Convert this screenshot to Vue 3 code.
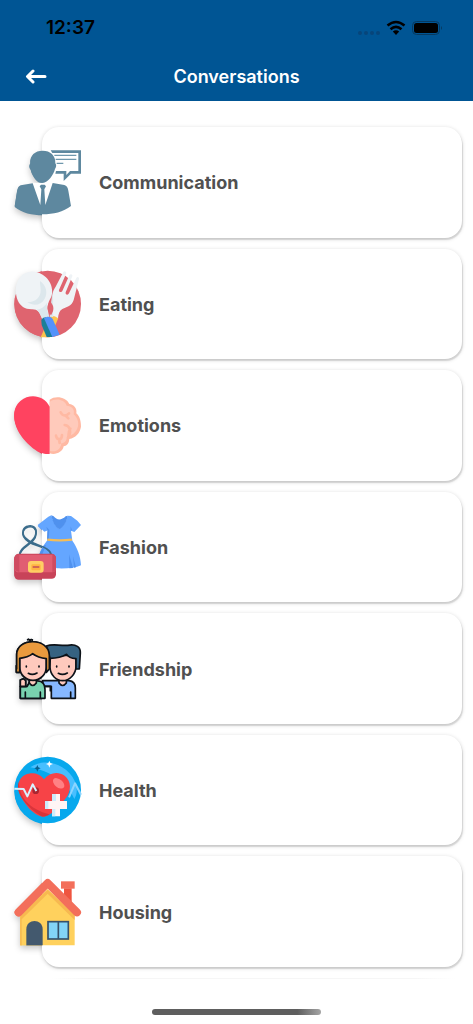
<script setup>
const topics = [
  { id: 'communication', label: 'Communication', box: '42 40 204 204' },
  { id: 'eating', label: 'Eating', box: '42 36 204 204' },
  { id: 'emotions', label: 'Emotions', box: '42 35 204 204' },
  { id: 'fashion', label: 'Fashion', box: '42 34 204 204' },
  { id: 'friendship', label: 'Friendship', box: '42 33 204 204' },
  { id: 'health', label: 'Health', box: '42 34 204 204' },
  { id: 'housing', label: 'Housing', box: '42 39 204 204' },
]
</script>

<template>
  <div class="page">
    <svg class="sprite" aria-hidden="true">
      <defs>
        <g id="communication">
          <path fill="#5e889f" d="M152 47H243V117H213L191 139V117H166L168 109H199V121L210 109H235V55H157Z" />
          <path stroke="#6f98ad" stroke-width="4" d="M163 62H229M167 74H229M170 86H190" />
          <path fill="#fff" d="M98 144L160 144L148 212H108Z" />
          <path fill="#5e889f" d="M128 48C151 48 167 62 166 86C170 90 169 98 165 103C160 122 144 144 128 145C112 144 96 122 92 103C87 98 87 90 91 86C89 62 105 48 128 48Z" />
          <path fill="#5e889f" d="M98 146L62 152C54 155 53 162 51 170L44 214C66 232 96 239 128 239C160 239 190 232 213 214L205 168C203 157 200 153 193 151L158 145L136 211L133 164L138 155L134 150H123L119 155L124 164L121 211Z" />
        </g>
        <g id="eating">
          <circle cx="143" cy="138" r="100" fill="#df646f" />
          <path fill="#fcc34e" d="M148 178C155 171 169 172 175 181L150 238H122Z" />
          <path fill="#eff3f6" d="M190 42C193 37 200 41 199 46L177 96C175 102 184 105 187 99L208 52C212 46 219 50 217 55L197 103C195 110 204 113 207 106L229 60C232 54 238 58 237 63L221 126C215 144 201 147 187 153C178 158 175 169 174 181C165 173 154 171 150 176L158 105C161 94 166 88 170 80Z" />
          <path fill="#dce7ec" d="M157 105C162 128 157 144 160 177L149 176L152 146Z" />
          <path fill="#eff3f6" d="M58 62C76 35 114 36 137 57C157 75 162 105 150 124C141 139 143 154 147 176L127 184C119 162 113 154 97 154C77 155 60 145 53 127C45 104 45 82 58 62Z" />
          <path fill="#dce7ec" d="M120 69C139 81 144 106 134 122C123 142 102 145 82 133C108 132 122 118 122 97C122 86 119 77 120 69ZM110 155C124 153 135 145 141 134C139 148 143 162 147 176L127 184C121 169 116 159 110 155Z" />
          <path fill="#df646f" d="M150 130C163 144 163 156 153 172C140 158 138 146 150 130Z" />
          <path fill="#1b7f97" d="M124 186C127 180 132 178 138 178L158 237H140L125 201Z" />
          <path fill="#5392fa" d="M132 181C140 174 153 174 158 183L179 230L157 237Z" />
        </g>
        <g id="emotions">
          <path fill="#ffb9a3" d="M149 61C165 48 199 52 208 74C221 76 232 86 229 102C240 112 243 126 243 142C239 164 226 174 208 179C206 196 199 199 191 201C188 219 166 228 149 222Z" />
          <path fill="#ffcabb" d="M149 68C166 55 194 60 200 79C215 80 225 89 221 105C232 115 237 129 234 141C229 160 216 169 201 172C200 185 193 191 184 192C182 213 164 220 149 214Z" />
          <path fill="none" stroke="#ffb9a3" stroke-width="8" stroke-linecap="round" d="M182 99C187 111 199 111 207 102M195 108C201 113 204 116 205 117M194 137C213 140 211 157 209 167M211 148C203 159 208 166 204 176M168 169C171 183 186 184 186 167M177 179L179 191" />
          <path fill="#ff4360" d="M149 82C132 48 90 42 62 64C38 84 37 119 54 151C72 186 114 220 138 224H149Z" />
        </g>
        <g id="fashion">
          <path fill="#64a6ff" d="M145 45L154 41C158 58 165 73 177 82C190 74 199 60 203 42L213 43L232 57L243 70L223 91L213 87L217 117C231 137 242 163 243 191C226 199 202 201 170 200L118 158C122 145 130 132 142 116L144 86L133 90L113 70Z" />
          <path fill="#4f91ee" d="M154 41L161 44C170 56 184 57 197 44L203 42C200 60 191 77 177 83C164 74 157 59 154 41ZM139 75L148 85L146 113L141 114L142 86ZM212 74L216 86L212 87ZM207 158L219 199L208 200ZM219 164L228 197L222 198ZM130 132L138 130L125 163L118 158Z" />
          <path fill="none" stroke="#f5bd57" stroke-width="7" d="M142 114Q178 118 216 114" />
          <path fill="none" stroke="#3b6c8b" stroke-width="5" stroke-linecap="round" d="M58 163C58 131 106 126 108 94C110 78 99 70 85 73C69 76 66 91 71 102C85 132 148 128 154 160" />
          <rect x="43" y="156" width="125" height="75" rx="13" fill="#c84359" />
          <path fill="#e15d72" d="M51 159H160L167 170V202Q166 212 156 212H57Q45 212 44 201V170Z" />
          <path fill="#cf4b61" d="M43 169Q46 158 58 157V211Q47 210 44 200ZM157 157Q166 158 168 170V200Q166 210 157 212Z" />
          <rect x="84" y="178" width="47" height="35" rx="9" fill="#ffce64" />
          <rect x="94" y="188" width="28" height="18" rx="4" fill="#ffb342" />
          <path stroke="#bd405a" stroke-width="4" d="M98 196H118" />
        </g>
        <g id="friendship" stroke="#0d1218" stroke-width="5" stroke-linejoin="round" stroke-linecap="round">
          <path fill="#86b8ff" d="M128 170H207Q226 172 226 192V223H154V187H129Z" />
          <path fill="#ffc9bd" d="M177 168V177Q188 192 199 177V168" />
          <path fill="#ffc9bd" d="M151 94H228V127C228 151 208 170 188 170C169 170 151 154 150 130Z" />
          <path fill="#366281" d="M139 66C158 59 174 65 203 64C229 59 242 70 241 87L238 135H228V104C214 103 204 98 200 91C187 99 171 103 150 103Z" />
          <path fill="#79d2b0" d="M61 223V188H81L91 171H113C127 171 136 181 135 197V223Z" />
          <path fill="#ffc9bd" d="M61 187V168L70 164L77 170V187ZM88 169V177Q98 192 109 177V169" />
          <path fill="#ffc9bd" d="M59 103L97 90L139 103V129C139 151 121 169 99 169C77 169 59 151 59 128Z" />
          <path fill="#e99a3e" d="M50 135V92C50 40 147 40 148 94V135L139 145V104C119 102 107 96 98 89C88 97 77 101 59 103V145H49V125" />
          <path fill="none" d="M83 47Q88 44 91 52Q91 44 97 48M85 148Q97 155 111 147M175 148Q188 155 202 147M79 126V129M117 126V129M170 126V129M207 126V129M76 204V221M121 204V221M137 187H151V200M212 204V221" />
        </g>
        <g id="health">
          <circle cx="143" cy="136" r="100" fill="#07a8ed" />
          <path fill="#48bfff" d="M91 68C134 37 201 59 224 109C234 130 231 151 223 163C209 130 174 84 91 68Z" />
          <path fill="#f74347" d="M132 104C113 78 76 82 61 103C45 128 61 158 79 181C94 201 113 216 132 216C151 215 177 187 195 164C216 138 214 109 194 93C174 79 149 83 132 104Z" />
          <path fill="#d9353b" d="M57 112C56 158 90 194 148 209C140 215 131 218 122 213C87 193 42 145 57 112Z" />
          <ellipse cx="176" cy="116" rx="12" ry="20" fill="#ff8184" transform="rotate(-50 176 116)" />
          <circle cx="107" cy="138" r="10" fill="#a92631" />
          <path fill="none" stroke="#d8f2ff" stroke-width="6" stroke-linejoin="round" d="M43 132L71 133L82 155L98 119L109 139" />
          <path fill="none" stroke="#8bd5ff" stroke-width="6" stroke-linejoin="round" d="M207 158L225 116L243 150" />
          <path fill="#fff5f5" d="M156 148H180V169H201V193H180V215H156V193H135V169H156Z" />
          <path fill="#ccecfc" d="M156 148H168V169H145V193H135V169H156ZM156 193H166V215H156Z" />
          <path fill="#fff" d="M148 48L151 55L159 58L151 61L148 69L145 61L138 58L145 55Z" />
          <path fill="#07608e" d="M112 61L115 68L122 71L115 74L112 81L109 74L103 71L109 68Z" />
        </g>
        <g id="housing">
          <path fill="#ef5540" d="M192 70H215V112L192 91Z" />
          <rect x="183" y="49" width="41" height="22" fill="#f36f5b" />
          <path fill="#ffd15d" d="M61 146L143 72L224 147V241H61Z" />
          <path fill="#f7b950" d="M61 151L143 74L224 151V165L143 86L65 163V241H61Z" />
          <path fill="none" stroke="#f36f5b" stroke-width="24" stroke-linecap="round" stroke-linejoin="round" d="M56 142L143 54L231 142" />
          <path fill="#43596e" d="M79 241V193C79 160 128 160 128 193V241Z" />
          <rect x="144" y="170" width="61" height="52" fill="#82d4f7" stroke="#35516b" stroke-width="5" />
          <path stroke="#35516b" stroke-width="5" d="M175 170V222" />
        </g>
      </defs>
    </svg>

    <header class="header">
      <div class="status">
        <time class="clock">12:37</time>
        <svg class="signals" viewBox="0 0 84 20" aria-hidden="true">
          <g fill="#07457a">
            <circle cx="3" cy="15" r="2" /><circle cx="9" cy="15" r="2" />
            <circle cx="15" cy="15" r="2" /><circle cx="21" cy="15" r="2" />
          </g>
          <g fill="none" stroke="#000" stroke-width="2.600">
            <path d="M30.500 7.500Q39 0.500 47.500 7.500" />
            <path d="M33.500 11.200Q39 6.500 44.500 11.200" />
          </g>
          <path d="M35.800 13.500Q39 11 42.200 13.500L39 17Z" />
          <rect x="55.500" y="3.500" width="27" height="13" rx="4" fill="none" stroke="#07395f" />
          <rect x="57" y="5" width="24" height="10" rx="2.500" />
          <path fill="#07395f" d="M84 8Q86 10 84 12Z" />
        </svg>
      </div>
      <div class="nav">
        <button class="back" type="button" aria-label="Back">
          <svg viewBox="0 0 22 16" aria-hidden="true">
            <path d="M20 7.500H3M8 2L2.500 7.500L8 13" />
          </svg>
        </button>
        <h1>Conversations</h1>
      </div>
    </header>

    <main>
      <ul class="list">
        <li v-for="topic in topics" :key="topic.id">
          <svg class="shade" :viewBox="topic.box" aria-hidden="true">
            <use :href="'#' + topic.id" />
          </svg>
          <a class="card" :href="'#/' + topic.id">
            <svg class="icon" :viewBox="topic.box" aria-hidden="true">
              <use :href="'#' + topic.id" />
            </svg>
            <span>{{ topic.label }}</span>
          </a>
        </li>
      </ul>
    </main>

    <footer class="footer">
      <div class="next-edge"></div>
      <div class="home-bar"></div>
    </footer>
  </div>
</template>

<style>
body {
  background: #fff;
}
</style>

<style scoped>
.page {
  display: flex;
  flex-direction: column;
  min-height: 100vh;
  font-family: Inter, "Liberation Sans", sans-serif;
}

.sprite {
  position: absolute;
  width: 0;
  height: 0;
}

.header {
  background: #005594;
}

.status {
  display: flex;
  justify-content: space-between;
  align-items: center;
  height: 52px;
  padding: 3px 32px 0 46px;
  box-sizing: border-box;
}

.clock {
  font-size: 19px;
  line-height: 24px;
  font-weight: 600;
  color: #000;
}

.signals {
  width: 84px;
  height: 20px;
  overflow: visible;
}

.nav {
  display: grid;
  grid-template-columns: 48px 1fr 48px;
  align-items: center;
  height: 49px;
}

.back {
  display: flex;
  justify-content: flex-end;
  padding: 0;
  border: 0;
  background: none;
}

.back svg {
  width: 22px;
  height: 16px;
  margin-right: 1px;
  fill: none;
  stroke: #fff;
  stroke-width: 3;
  stroke-linecap: round;
  stroke-linejoin: round;
}

h1 {
  margin: 0;
  text-align: center;
  font-size: 18px;
  line-height: 24px;
  font-weight: 600;
  color: #fff;
}

main {
  display: flex;
  flex: 1;
  padding: 26px 11px 0 42px;
}

.list {
  display: flex;
  flex: 1;
  flex-direction: column;
  margin: 0;
  padding: 0;
  list-style: none;
}

li {
  position: relative;
  display: flex;
  flex: 1;
  min-height: 100px;
  padding-bottom: 11px;
}

.card {
  position: relative;
  display: flex;
  flex: 1;
  align-items: center;
  gap: 17px;
  border-radius: 17px;
  background: #fff;
  box-shadow: 0 1px 4px rgba(0, 0, 0, 0.18), 1px 2px 1px rgba(0, 0, 0, 0.1);
  font-size: 18px;
  line-height: 24px;
  font-weight: 700;
  color: #505050;
  text-decoration: none;
}

.card span {
  padding-top: 2px;
}

.icon,
.shade {
  flex: none;
  width: 68px;
  height: 68px;
  margin-left: -28px;
}

.shade {
  position: absolute;
  top: calc(50% - 39px);
  left: 0;
  overflow: visible;
  filter: drop-shadow(0 3px 3px rgba(0, 0, 0, 0.22));
}

.footer {
  display: flex;
  flex-direction: column;
  justify-content: space-between;
  align-items: center;
  height: 46px;
  padding-bottom: 9px;
  box-sizing: border-box;
}

.next-edge {
  align-self: stretch;
  height: 1px;
  margin: 0 18px 0 50px;
  background: linear-gradient(90deg, #fff, #f6f6f6 10%, #f6f6f6 90%, #fff);
}

.home-bar {
  width: 169px;
  height: 6px;
  border-radius: 3px;
  background: linear-gradient(90deg, #5e5e5e 0%, #5e5e5e 86%, #a5a5a5 100%);
}
</style>
